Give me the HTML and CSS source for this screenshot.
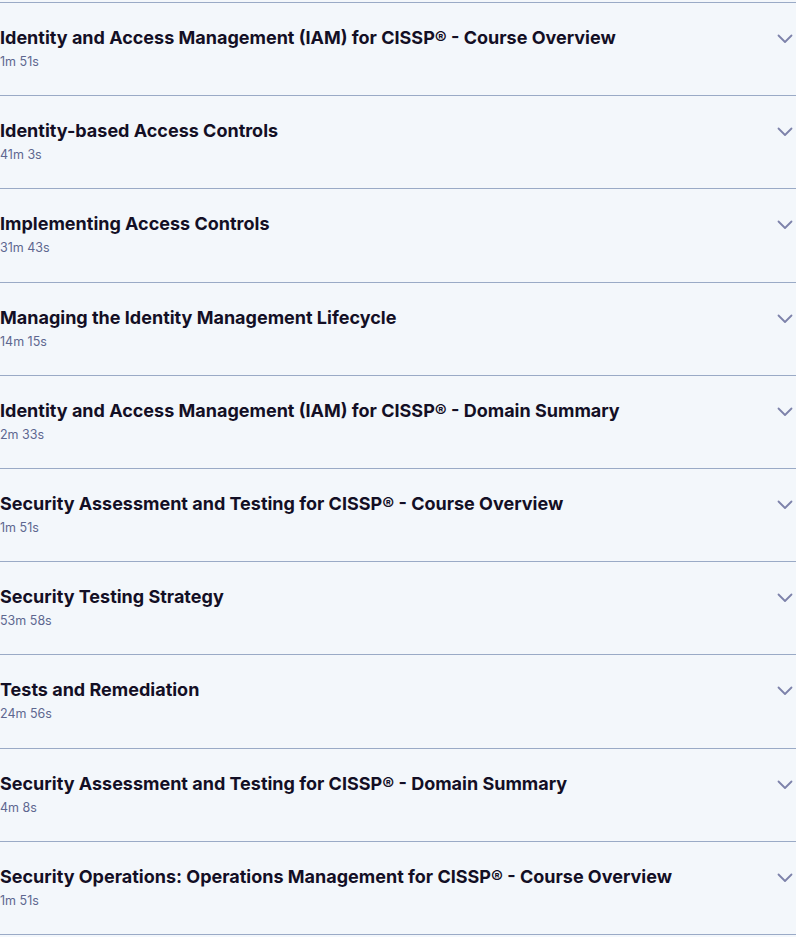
FILE: index.html
```html
<!DOCTYPE html>
<html lang="en">
<head>
	<meta charset="UTF-8">
	<title>Course content</title>
	<link rel="stylesheet" href="styles.css">
</head>
<body>
	<ul class="module-list">
		<li class="module">
			<div class="module-text">
				<h3 class="module-title">Identity and Access Management (IAM) for CISSP® - Course Overview</h3>
				<span class="module-time">1m 51s</span>
			</div>
			<svg class="chevron" viewBox="0 0 16 10"><path d="M1.5 1.5 L8 8 L14.5 1.5"/></svg>
		</li>
		<li class="module">
			<div class="module-text">
				<h3 class="module-title">Identity-based Access Controls</h3>
				<span class="module-time">41m 3s</span>
			</div>
			<svg class="chevron" viewBox="0 0 16 10"><path d="M1.5 1.5 L8 8 L14.5 1.5"/></svg>
		</li>
		<li class="module">
			<div class="module-text">
				<h3 class="module-title">Implementing Access Controls</h3>
				<span class="module-time">31m 43s</span>
			</div>
			<svg class="chevron" viewBox="0 0 16 10"><path d="M1.5 1.5 L8 8 L14.5 1.5"/></svg>
		</li>
		<li class="module">
			<div class="module-text">
				<h3 class="module-title">Managing the Identity Management Lifecycle</h3>
				<span class="module-time">14m 15s</span>
			</div>
			<svg class="chevron" viewBox="0 0 16 10"><path d="M1.5 1.5 L8 8 L14.5 1.5"/></svg>
		</li>
		<li class="module">
			<div class="module-text">
				<h3 class="module-title">Identity and Access Management (IAM) for CISSP® - Domain Summary</h3>
				<span class="module-time">2m 33s</span>
			</div>
			<svg class="chevron" viewBox="0 0 16 10"><path d="M1.5 1.5 L8 8 L14.5 1.5"/></svg>
		</li>
		<li class="module">
			<div class="module-text">
				<h3 class="module-title">Security Assessment and Testing for CISSP® - Course Overview</h3>
				<span class="module-time">1m 51s</span>
			</div>
			<svg class="chevron" viewBox="0 0 16 10"><path d="M1.5 1.5 L8 8 L14.5 1.5"/></svg>
		</li>
		<li class="module">
			<div class="module-text">
				<h3 class="module-title">Security Testing Strategy</h3>
				<span class="module-time">53m 58s</span>
			</div>
			<svg class="chevron" viewBox="0 0 16 10"><path d="M1.5 1.5 L8 8 L14.5 1.5"/></svg>
		</li>
		<li class="module">
			<div class="module-text">
				<h3 class="module-title">Tests and Remediation</h3>
				<span class="module-time">24m 56s</span>
			</div>
			<svg class="chevron" viewBox="0 0 16 10"><path d="M1.5 1.5 L8 8 L14.5 1.5"/></svg>
		</li>
		<li class="module">
			<div class="module-text">
				<h3 class="module-title">Security Assessment and Testing for CISSP® - Domain Summary</h3>
				<span class="module-time">4m 8s</span>
			</div>
			<svg class="chevron" viewBox="0 0 16 10"><path d="M1.5 1.5 L8 8 L14.5 1.5"/></svg>
		</li>
		<li class="module">
			<div class="module-text">
				<h3 class="module-title">Security Operations: Operations Management for CISSP® - Course Overview</h3>
				<span class="module-time">1m 51s</span>
			</div>
			<svg class="chevron" viewBox="0 0 16 10"><path d="M1.5 1.5 L8 8 L14.5 1.5"/></svg>
		</li>
	</ul>
</body>
</html>
```

FILE: styles.css
```css
* {
	margin: 0;
	padding: 0;
	box-sizing: border-box;
}
body {
	background-color: #f3f7fb;
	font-family: Inter, "Noto Sans", sans-serif;
	padding-top: 2px;
}
.module-list {
	list-style: none;
	border-top: 1px solid #9aaac6;
}
.module {
	display: flex;
	align-items: flex-start;
	justify-content: space-between;
	height: 93.2px;
	padding-top: 22px;
	border-bottom: 1px solid #9aaac6;
}
.module-title {
	font-size: 18px;
	font-weight: 700;
	line-height: 26px;
	color: #130f25;
}
.module-time {
	display: block;
	margin-top: 1px;
	font-size: 12.5px;
	line-height: 20px;
	color: #5e6790;
}
.chevron {
	width: 16px;
	height: 10px;
	margin: 9px 3px 0 0;
	fill: none;
	stroke: #7d82aa;
	stroke-width: 1.8;
	stroke-linecap: round;
	stroke-linejoin: round;
}
```
